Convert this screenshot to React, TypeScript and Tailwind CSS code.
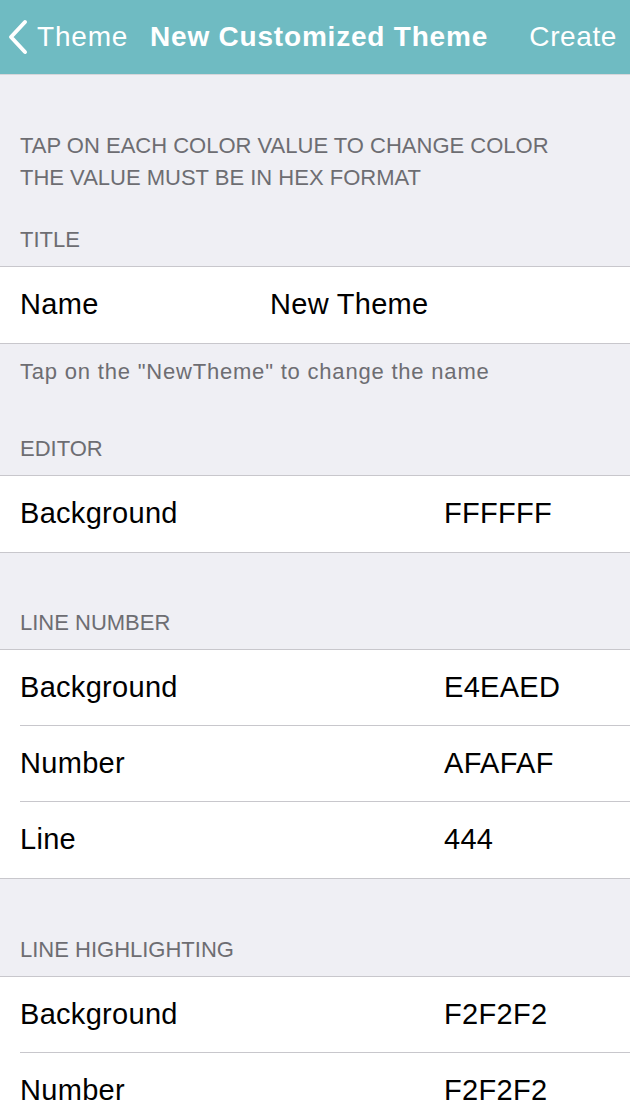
import React from 'react';

type Row = { label: string; value: string };

const sections: { title: string; rows: Row[]; gapTop: string }[] = [
  {
    title: 'EDITOR',
    gapTop: 'pt-[53px]',
    rows: [{ label: 'Background', value: 'FFFFFF' }],
  },
  {
    title: 'LINE NUMBER',
    gapTop: 'pt-[58px]',
    rows: [
      { label: 'Background', value: 'E4EAED' },
      { label: 'Number', value: 'AFAFAF' },
      { label: 'Line', value: '444' },
    ],
  },
  {
    title: 'LINE HIGHLIGHTING',
    gapTop: 'pt-[59px]',
    rows: [
      { label: 'Background', value: 'F2F2F2' },
      { label: 'Number', value: 'F2F2F2' },
    ],
  },
];

function SectionHeader({ children }: { children: React.ReactNode }) {
  return (
    <div className="px-5 pb-[14px] text-[22px] leading-6 text-[#6d6d72]">{children}</div>
  );
}

function Cells({ rows, valueCol }: { rows: Row[]; valueCol: string }) {
  return (
    <div className="bg-white border-y border-[#c8c7cc]">
      {rows.map((r, i) => (
        <div key={i} className="pl-5">
          <div
            className={`flex items-center h-[76px] text-[29px] tracking-[0.3px] text-black ${
              i < rows.length - 1 ? 'border-b border-[#c8c7cc]' : ''
            }`}
          >
            <span className={valueCol}>{r.label}</span>
            <span>{r.value}</span>
          </div>
        </div>
      ))}
    </div>
  );
}

export default function App() {
  return (
    <div className="w-[630px] h-[1118px] overflow-hidden bg-[#efeff4]" style={{ fontFamily: '"Liberation Sans", Arial, sans-serif' }}>
      {/* Nav bar */}
      <div className="h-[75px] bg-[#6fbbc2] flex items-center text-white border-b border-[#d6d6da]">
        <div className="flex items-center pl-[7px] w-[142px]">
          <svg width="22" height="36" viewBox="0 0 22 36" fill="none">
            <path d="M18 3 L4 18 L18 33" stroke="white" strokeWidth="4" strokeLinecap="round" strokeLinejoin="round" />
          </svg>
          <span className="ml-[8px] text-[28px] tracking-[0.8px]">Theme</span>
        </div>
        <div className="flex-1 text-[28px] font-bold tracking-[0.8px] pl-[8px]">New Customized Theme</div>
        <div className="pr-[13px] text-[28px] tracking-[0.6px]">Create</div>
      </div>

      {/* Intro */}
      <div className="px-5 pt-[55px] pb-[34px] text-[22px] leading-8 text-[#6d6d72]">
        <div>TAP ON EACH COLOR VALUE TO CHANGE COLOR</div>
        <div>THE VALUE MUST BE IN HEX FORMAT</div>
      </div>

      <SectionHeader>TITLE</SectionHeader>
      <Cells rows={[{ label: 'Name', value: 'New Theme' }]} valueCol="w-[250px]" />
      <div className="px-5 pt-4 text-[22px] leading-6 tracking-[0.8px] text-[#6d6d72]">Tap on the "NewTheme" to change the name</div>

      {sections.map((s) => (
        <div key={s.title} className={s.gapTop}>
          <SectionHeader>{s.title}</SectionHeader>
          <Cells rows={s.rows} valueCol="w-[424px]" />
        </div>
      ))}
    </div>
  );
}
